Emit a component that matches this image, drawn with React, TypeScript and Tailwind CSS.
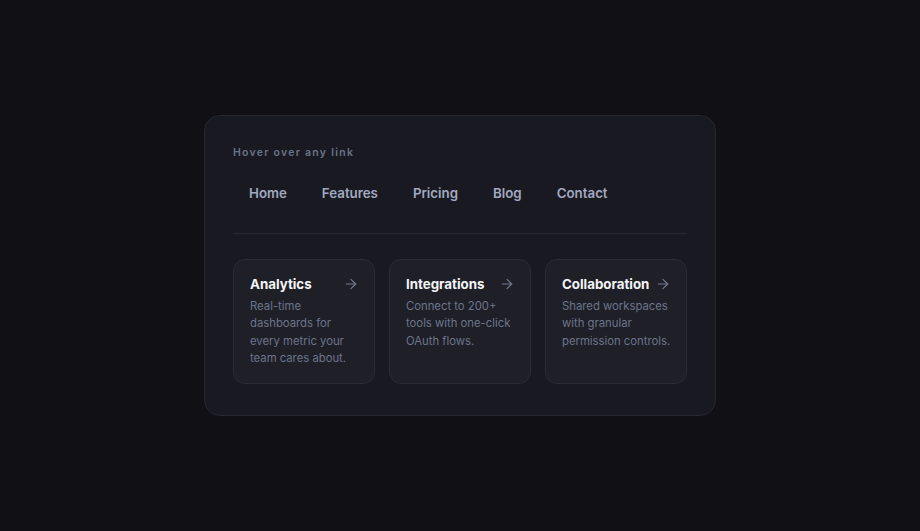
import React from "react";

const links = ["Home", "Features", "Pricing", "Blog", "Contact"];
const cards = [
  { title: "Analytics", desc: "Real-time dashboards for every metric your team cares about." },
  { title: "Integrations", desc: "Connect to 200+ tools with one-click OAuth flows." },
  { title: "Collaboration", desc: "Shared workspaces with granular permission controls." },
];

function Arrow() {
  return (
    <svg width="16" height="16" viewBox="0 0 24 24" fill="none" stroke="currentColor" strokeWidth="1.75" strokeLinecap="round" strokeLinejoin="round">
      <path d="M5 12h14" />
      <path d="m12 5 7 7-7 7" />
    </svg>
  );
}

export default function App() {
  return (
    <div className="min-h-screen w-full bg-[#111115] flex items-center justify-center" style={{ fontFamily: "Inter, 'Noto Sans', sans-serif" }}>
      <div className="w-[512px] rounded-2xl border border-[#25262e] bg-[#191a21] px-7 pt-[29px] pb-[31px]">
        <div className="text-[10.5px] font-semibold tracking-[0.12em] text-[#6b7387] leading-4">Hover over any link</div>
        <nav className="mt-[14px] flex gap-[3px] pb-[22px] border-b border-[#272830]">
          {links.map((l) => (
            <a key={l} className="px-4 py-2 text-[13.3px] font-semibold text-[#a2a9c0] leading-5">{l}</a>
          ))}
        </nav>
        <div className="mt-[25px] grid grid-cols-3 gap-3.5">
          {cards.map((c) => (
            <div key={c.title} className="h-[125px] rounded-xl border border-[#2a2b34] bg-[#1e1f27] pl-4 pr-[15px] pt-[14px]">
              <div className="flex items-center justify-between">
                <span className="text-[13.3px] font-bold text-[#f3f4f6] leading-5">{c.title}</span>
                <span className="text-[#737a8e]"><Arrow /></span>
              </div>
              <p className="mt-[3.5px] text-[11.3px] leading-[17.5px] text-[#6d758b]">{c.desc}</p>
            </div>
          ))}
        </div>
      </div>
    </div>
  );
}
